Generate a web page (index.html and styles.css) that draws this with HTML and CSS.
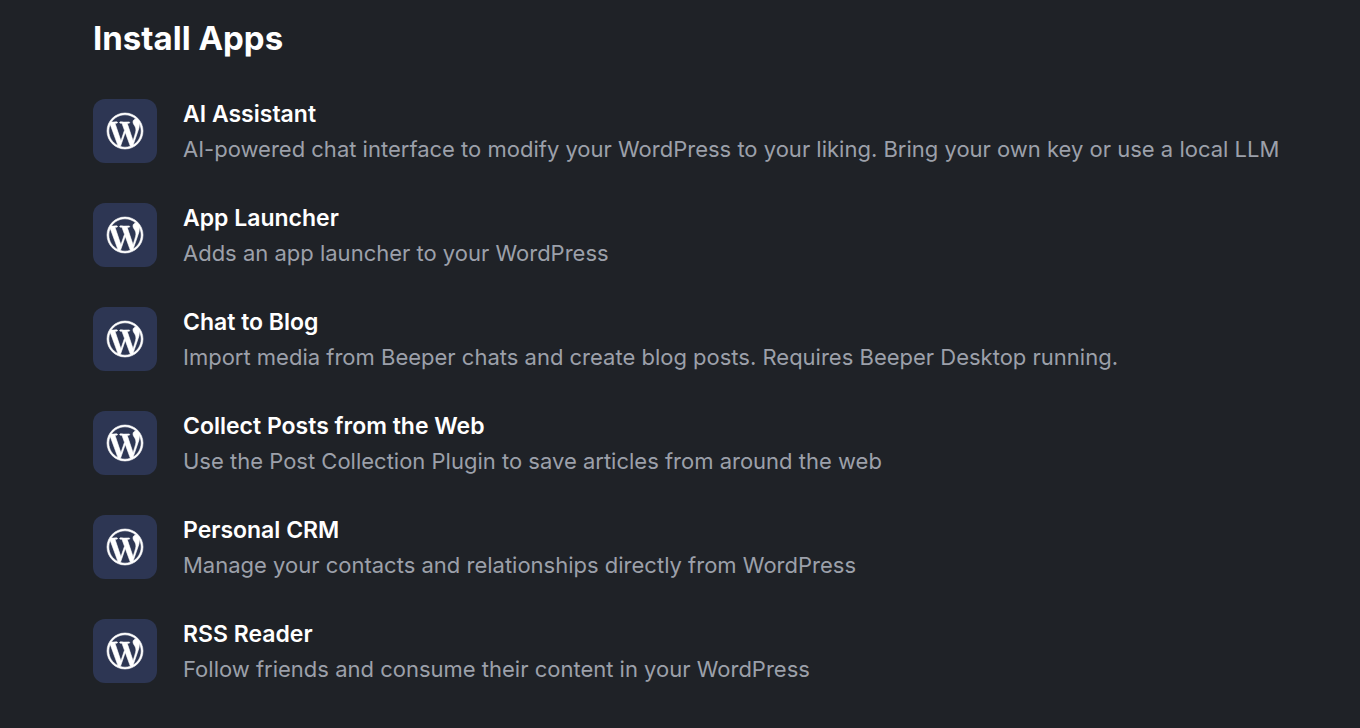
FILE: index.html
```html
<!DOCTYPE html>
<html lang="en">
<head>
<meta charset="utf-8">
<title>Install Apps</title>
<link rel="stylesheet" href="styles.css">
</head>
<body>
<svg width="0" height="0" class="defs" aria-hidden="true">
<symbol id="wp" viewBox="0 0 24 24" overflow="visible"><path d="M21.469 6.825c.84 1.537 1.318 3.3 1.318 5.175 0 3.979-2.156 7.456-5.363 9.325l3.295-9.527c.615-1.54.82-2.771.82-3.864 0-.405-.026-.78-.07-1.11m-7.981.105c.647-.03 1.232-.105 1.232-.105.582-.075.514-.93-.067-.899 0 0-1.755.135-2.88.135-1.064 0-2.85-.15-2.85-.15-.585-.03-.661.855-.075.885 0 0 .54.061 1.125.09l1.68 4.605-2.37 7.08L5.354 6.9c.649-.03 1.234-.1 1.234-.1.585-.075.516-.93-.065-.896 0 0-1.746.138-2.874.138-.2 0-.438-.008-.69-.015C4.911 3.15 8.235 1.215 12 1.215c2.809 0 5.365 1.072 7.286 2.833-.046-.003-.091-.009-.141-.009-1.06 0-1.812.923-1.812 1.914 0 .89.513 1.643 1.06 2.531.411.72.89 1.643.89 2.977 0 .915-.354 1.994-.821 3.479l-1.075 3.585-3.9-11.61.001.014zM12 22.784c-1.059 0-2.081-.153-3.048-.437l3.237-9.406 3.315 9.087c.024.053.05.101.078.149-1.12.393-2.325.609-3.582.609M1.211 12c0-1.564.336-3.05.935-4.39L7.29 21.709C3.694 19.96 1.212 16.271 1.211 12M12 0C5.385 0 0 5.385 0 12s5.385 12 12 12 12-5.385 12-12S18.615 0 12 0"/></symbol>
</svg>
<main class="page">
<h1 class="title">Install Apps</h1>
<ul class="apps">
<li class="app"><span class="tile"><svg class="logo" aria-hidden="true"><use href="#wp"/></svg></span><div class="text"><h2 class="name">AI Assistant</h2><p class="desc">AI-powered chat interface to modify your WordPress to your liking. Bring your own key or use a local LLM</p></div></li>
<li class="app"><span class="tile"><svg class="logo" aria-hidden="true"><use href="#wp"/></svg></span><div class="text"><h2 class="name">App Launcher</h2><p class="desc">Adds an app launcher to your WordPress</p></div></li>
<li class="app"><span class="tile"><svg class="logo" aria-hidden="true"><use href="#wp"/></svg></span><div class="text"><h2 class="name">Chat to Blog</h2><p class="desc">Import media from Beeper chats and create blog posts. Requires Beeper Desktop running.</p></div></li>
<li class="app"><span class="tile"><svg class="logo" aria-hidden="true"><use href="#wp"/></svg></span><div class="text"><h2 class="name">Collect Posts from the Web</h2><p class="desc">Use the Post Collection Plugin to save articles from around the web</p></div></li>
<li class="app"><span class="tile"><svg class="logo" aria-hidden="true"><use href="#wp"/></svg></span><div class="text"><h2 class="name">Personal CRM</h2><p class="desc">Manage your contacts and relationships directly from WordPress</p></div></li>
<li class="app"><span class="tile"><svg class="logo" aria-hidden="true"><use href="#wp"/></svg></span><div class="text"><h2 class="name">RSS Reader</h2><p class="desc">Follow friends and consume their content in your WordPress</p></div></li>
</ul>
</main>
</body>
</html>
```
FILE: styles.css
```css
body {
  margin: 0;
  background: #1f2227;
  color: #fff;
  font-family: Inter, "Liberation Sans", sans-serif;
}
.defs { position: absolute; }
.page { padding: 16px 40px 40px 93px; }
.title {
  margin: 0 0 36px;
  font-size: 33px;
  line-height: 44px;
  font-weight: 700;
}
.apps {
  display: flex;
  flex-direction: column;
  gap: 34px;
  margin: 0;
  padding: 0;
  list-style: none;
}
.app {
  display: flex;
  align-items: center;
  gap: 26px;
}
.tile {
  display: flex;
  flex: none;
  align-items: center;
  justify-content: center;
  width: 64px;
  height: 64px;
  border-radius: 12px;
  background: #2d3653;
}
.logo {
  width: 36px;
  height: 36px;
  overflow: visible;
  fill: #fff;
  stroke: #fff;
  stroke-width: 0.4;
}
.name {
  margin: 0;
  font-size: 23px;
  line-height: 36px;
  font-weight: 600;
}
.desc {
  margin: 0;
  color: #9ca0aa;
  font-size: 22px;
  line-height: 34px;
}
```
